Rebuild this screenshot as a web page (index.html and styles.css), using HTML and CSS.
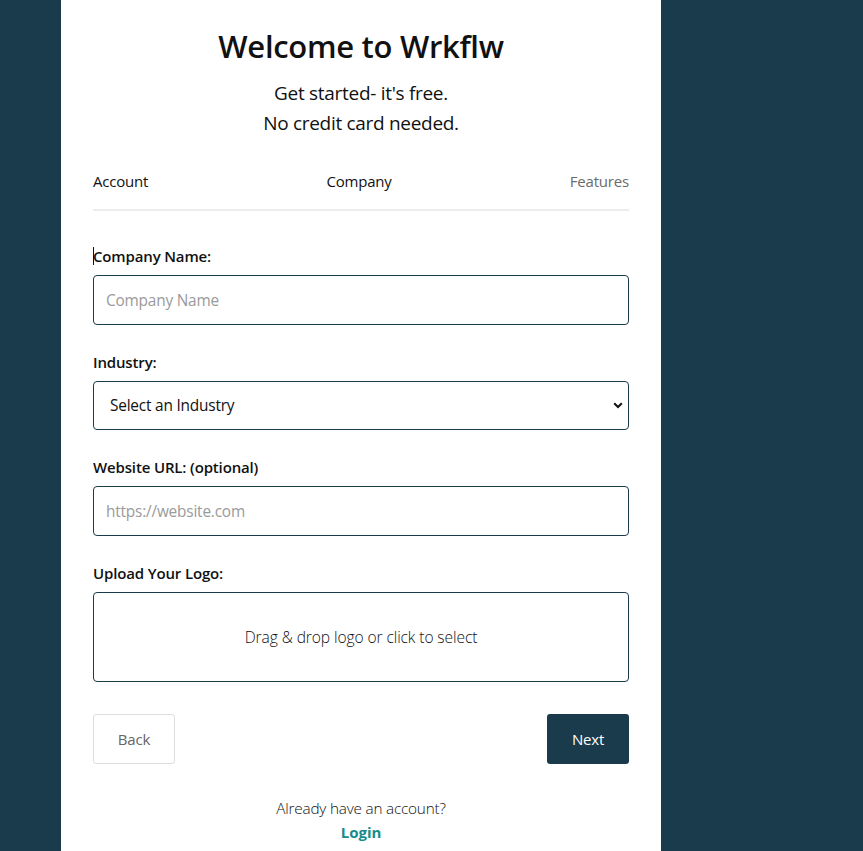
FILE: index.html
```html
<!DOCTYPE html>
<html lang="en">
<head>
<meta charset="utf-8">
<title>Welcome to Wrkflw</title>
<link rel="stylesheet" href="styles.css">
</head>
<body>
<div class="page">
  <main class="card">
    <h1 class="title">Welcome to Wrkflw</h1>
    <p class="subtitle">Get started- it's free.<br>No credit card needed.</p>
    <nav class="steps">
      <span class="step">Account</span>
      <span class="step">Company</span>
      <span class="step step-muted">Features</span>
    </nav>
    <form class="form">
      <div class="group">
        <label class="label"><span class="caret"></span>Company Name:</label>
        <input class="field" type="text" placeholder="Company Name">
      </div>
      <div class="group">
        <label class="label">Industry:</label>
        <div class="select-wrap">
          <select class="field select">
            <option>Select an Industry</option>
          </select>
          <svg class="chev" width="10" height="7" viewBox="0 0 10 7"><path d="M1.2 1.2 L5 5 L8.8 1.2" fill="none" stroke="#111" stroke-width="2"/></svg>
        </div>
      </div>
      <div class="group">
        <label class="label">Website URL: (optional)</label>
        <input class="field" type="text" placeholder="https://website.com">
      </div>
      <div class="group">
        <label class="label">Upload Your Logo:</label>
        <div class="drop">Drag &amp; drop logo or click to select</div>
      </div>
      <div class="actions">
        <button type="button" class="btn btn-back">Back</button>
        <button type="button" class="btn btn-next">Next</button>
      </div>
    </form>
    <div class="footer">
      <p class="already">Already have an account?</p>
      <a class="login" href="#">Login</a>
    </div>
  </main>
</div>
</body>
</html>
```
FILE: styles.css
```css
* { box-sizing: border-box; }
html, body { margin: 0; padding: 0; }
body {
  background: #193b4b;
  font-family: "Open Sans", "Noto Sans", sans-serif;
  color: #111;
  height: 851px;
  overflow: hidden;
}
.page {
  padding-left: 61px;
}
.card {
  width: 600px;
  min-height: 851px;
  background: #fff;
  padding: 22px 32px 0;
}
.title {
  margin: 0;
  text-align: center;
  font-size: 31px;
  font-weight: 600;
  line-height: 48px;
  letter-spacing: -0.3px;
}
.subtitle {
  margin: 8px 0 0;
  text-align: center;
  font-size: 19px;
  line-height: 30px;
  letter-spacing: -0.3px;
}
.steps {
  display: flex;
  justify-content: space-between;
  margin-top: 33px;
  padding-bottom: 18px;
  border-bottom: 2px solid #ececec;
  font-size: 15px;
  line-height: 20px;
  letter-spacing: -0.2px;
}
.step-muted { color: #6b6b6b; }
.form {
  margin-top: 33px;
}
.group {
  display: flex;
  flex-direction: column;
  gap: 7px;
  margin-bottom: 25px;
}
.label {
  font-size: 15px;
  font-weight: 600;
  line-height: 24px;
  letter-spacing: -0.15px;
  display: flex;
  align-items: center;
}
.caret {
  display: inline-block;
  width: 1px;
  height: 18px;
  background: #111;
  margin-right: -1px;
}
.field {
  width: 100%;
  height: 50px;
  border: 1px solid #193b4b;
  border-radius: 4px;
  padding: 0 12px;
  font-family: inherit;
  font-size: 15.4px;
  color: #111;
  background: #fff;
  letter-spacing: -0.2px;
}
.field::placeholder { color: #9a9a9a; }
.select-wrap { position: relative; }
.select {
  -webkit-appearance: none;
  appearance: none;
  height: 49px;
  padding: 0 16px;
  color: #111;
}
.chev {
  position: absolute;
  right: 6px;
  top: 21px;
}
.drop {
  height: 90px;
  border: 1px solid #193b4b;
  border-radius: 4px;
  display: flex;
  align-items: center;
  justify-content: center;
  font-size: 15.6px;
  font-weight: 300;
  color: #111;
  letter-spacing: -0.1px;
}
.actions {
  display: flex;
  justify-content: space-between;
  margin-top: 32px;
}
.btn {
  width: 82px;
  height: 50px;
  border-radius: 3px;
  font-family: inherit;
  font-size: 15px;
  letter-spacing: -0.2px;
  cursor: pointer;
}
.btn-back {
  background: #fff;
  border: 1px solid #dddddd;
  color: #666;
}
.btn-next {
  background: #193b4b;
  border: none;
  color: #fff;
}
.footer {
  margin-top: 34px;
  text-align: center;
}
.already {
  margin: 0;
  font-size: 15.3px;
  font-weight: 300;
  line-height: 20px;
  letter-spacing: -0.2px;
}
.login {
  display: inline-block;
  margin-top: 4px;
  color: #178b8b;
  font-weight: 700;
  font-size: 15px;
  text-decoration: none;
}
```
